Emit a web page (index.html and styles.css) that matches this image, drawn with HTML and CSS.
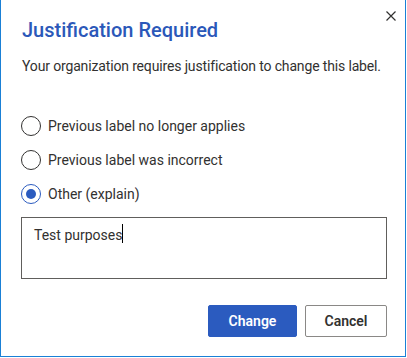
FILE: index.html
```html
<!DOCTYPE html>
<html lang="en">
  <head>
    <meta charset="UTF-8" />
    <title>Justification Required</title>
    <link rel="stylesheet" href="styles.css">
  </head>
  <body>
    <div class="dialog">
      <button class="close" aria-label="Close">
        <svg width="10" height="10" viewBox="0 0 10 10">
          <path d="M0.5 0.5 L9.5 9.5 M9.5 0.5 L0.5 9.5" stroke="#323130" stroke-width="1.2" fill="none" />
        </svg>
      </button>

      <h1 class="title">Justification Required</h1>
      <p class="intro">Your organization requires justification to change this label.</p>

      <div class="options">
        <label class="option">
          <span class="radio"></span>
          <span>Previous label no longer applies</span>
        </label>
        <label class="option">
          <span class="radio"></span>
          <span>Previous label was incorrect</span>
        </label>
        <label class="option">
          <span class="radio checked"></span>
          <span>Other (explain)</span>
        </label>
      </div>

      <div class="explain">Test purposes<span class="caret"></span></div>

      <div class="actions">
        <button class="btn primary">Change</button>
        <button class="btn">Cancel</button>
      </div>
    </div>
  </body>
</html>
```

FILE: styles.css
```css
body {
  margin: 0;
  background-color: #fff;
  font-family: Roboto, "Liberation Sans", sans-serif;
  color: #323130;
}

.dialog {
  position: relative;
  box-sizing: border-box;
  width: 406px;
  height: 357px;
  border: 1px solid #1a80d6;
  border-top: none;
  padding: 16px 18px 0 20px;
  display: flex;
  flex-direction: column;
}

.close {
  position: absolute;
  top: 6px;
  right: 4px;
  width: 20px;
  height: 20px;
  padding: 0;
  border: none;
  background: transparent;
  display: flex;
  align-items: center;
  justify-content: center;
}

.title {
  margin: 0 0 0 1px;
  font-size: 20px;
  line-height: 28px;
  font-weight: 500;
  color: #2b58b9;
}

.intro {
  margin: 12px 0 0 1px;
  font-size: 14px;
  line-height: 20px;
  letter-spacing: -0.15px;
  white-space: nowrap;
}

.options {
  margin-top: 40px;
  display: flex;
  flex-direction: column;
  gap: 14px;
}

.option {
  display: flex;
  align-items: center;
  gap: 7px;
  height: 20px;
  font-size: 14px;
  line-height: 20px;
}

.radio {
  box-sizing: border-box;
  width: 20px;
  height: 20px;
  flex: none;
  border: 1px solid #323130;
  border-radius: 50%;
  display: flex;
  align-items: center;
  justify-content: center;
}

.radio.checked {
  border-color: #2b5bbf;
}

.radio.checked::after {
  content: "";
  width: 10px;
  height: 10px;
  border-radius: 50%;
  background-color: #2b5bbf;
}

.explain {
  box-sizing: border-box;
  margin-top: 13px;
  height: 62px;
  border: 1px solid #605e5c;
  padding: 6px 12px;
  font-size: 14px;
  line-height: 20px;
}

.caret {
  display: inline-block;
  width: 1px;
  height: 19px;
  background-color: #000;
  vertical-align: -3px;
}

.actions {
  margin-top: 26px;
  display: flex;
  justify-content: flex-end;
  gap: 8px;
}

.btn {
  box-sizing: border-box;
  height: 32px;
  width: 82px;
  padding: 0 16px;
  border: 1px solid #8a8886;
  border-radius: 2px;
  background-color: #fff;
  color: #323130;
  font-family: inherit;
  font-size: 14px;
  font-weight: 600;
}

.btn.primary {
  width: 89px;
  border-color: #2b5bbf;
  background-color: #2b5bbf;
  color: #fff;
}
```
